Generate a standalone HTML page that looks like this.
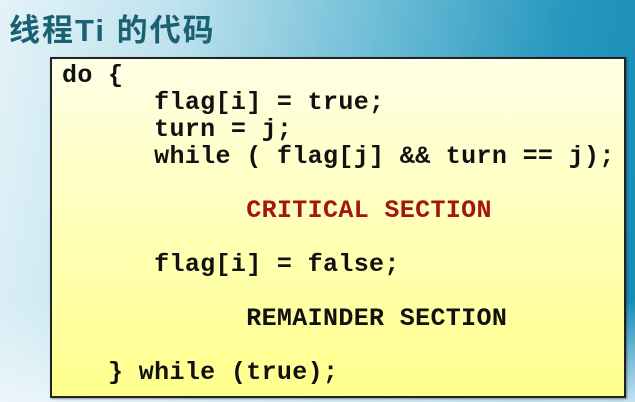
<!DOCTYPE html>
<html><head><meta charset="utf-8"><style>
html,body{margin:0;padding:0}
body{width:635px;height:402px;overflow:hidden;position:relative;
background:linear-gradient(100deg,#e4f3f8 0%,#bfe2ee 25%,#6cbcd6 55%,#2898bf 80%,#148bb6 100%);}
.bot{position:absolute;left:0;top:300px;width:635px;height:102px;background:linear-gradient(180deg,rgba(255,255,255,0) 0%,rgba(240,248,252,0.8) 100%)}
.title{position:absolute;left:9px;top:5px;font:bold 31px "Liberation Sans","Noto Sans CJK SC",sans-serif;color:#1a6273;letter-spacing:2px}
.box{position:absolute;left:50px;top:57px;width:572px;height:337px;border:2px solid #222;
background:linear-gradient(180deg,#ffffe6 0%,#ffffb8 50%,#ffff8c 100%);box-shadow:1px 1px 2px rgba(0,0,0,.4)}
pre{margin:0;position:absolute;left:10px;top:3px;font:bold 25px/27px "Liberation Mono",monospace;color:#111;letter-spacing:0.35px}
.r{color:#a31515}
</style></head><body>
<div class="bot"></div>
<div class="title">线程Ti 的代码</div>
<div class="box"><pre>do {
      flag[i] = true;
      turn = j;
      while ( flag[j] &amp;&amp; turn == j);

            <span class="r">CRITICAL SECTION</span>

      flag[i] = false;

            REMAINDER SECTION

   } while (true);</pre></div>
</body></html>
